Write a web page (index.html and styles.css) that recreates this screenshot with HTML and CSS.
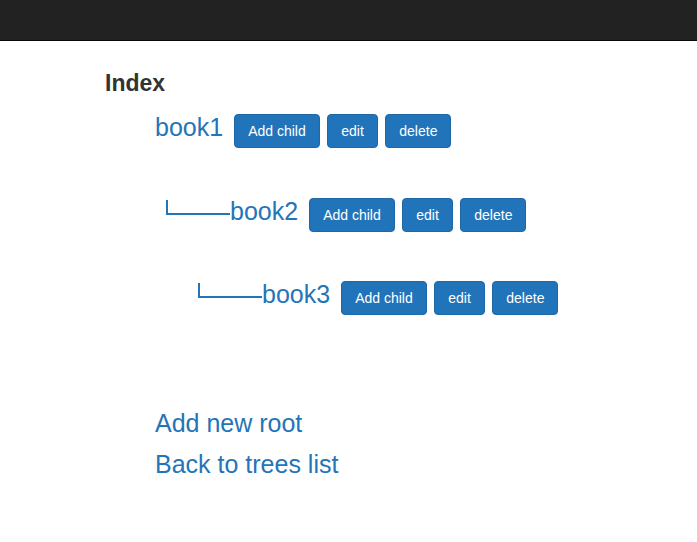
FILE: index.html
```html
<!DOCTYPE html>
<html lang="en">
<head>
<meta charset="utf-8">
<title>Index</title>
<link rel="stylesheet" href="styles.css">
</head>
<body>
<div class="navbar"></div>
<div class="container">
  <h3 class="title">Index</h3>
  <div class="tree">
    <div class="row level-0">
      <a class="node" href="#">book1</a>
      <div class="actions">
        <button class="btn">Add child</button>
        <button class="btn">edit</button>
        <button class="btn">delete</button>
      </div>
    </div>
    <div class="row level-1">
      <span class="connector"></span>
      <a class="node" href="#">book2</a>
      <div class="actions">
        <button class="btn">Add child</button>
        <button class="btn">edit</button>
        <button class="btn">delete</button>
      </div>
    </div>
    <div class="row level-2">
      <span class="connector"></span>
      <a class="node" href="#">book3</a>
      <div class="actions">
        <button class="btn">Add child</button>
        <button class="btn">edit</button>
        <button class="btn">delete</button>
      </div>
    </div>
  </div>
  <div class="links">
    <a class="big-link" href="#">Add new root</a>
    <a class="big-link" href="#">Back to trees list</a>
  </div>
</div>
</body>
</html>
```
FILE: styles.css
```css
html, body {
  margin: 0;
  padding: 0;
  background: #fff;
}
body {
  font-family: "Liberation Sans", Arial, Helvetica, sans-serif;
  font-size: 14px;
  line-height: 20px;
  color: #333;
}
.navbar {
  height: 40px;
  background: #222;
  border-bottom: 1px solid #080808;
}
.container {
  padding-left: 105px;
}
.title {
  margin: 30px 0 0;
  font-size: 23px;
  line-height: 24px;
  font-weight: 700;
  color: #333;
}
.tree {
  margin-top: 19px;
  display: flex;
  flex-direction: column;
  gap: 49.5px;
}
.row {
  display: flex;
  align-items: baseline;
  height: 34px;
}
.level-0 { padding-left: 50px; }
.level-1 { padding-left: 61px; }
.level-2 { padding-left: 93px; }
.connector {
  align-self: flex-start;
  box-sizing: border-box;
  width: 64px;
  height: 15px;
  margin-top: 2px;
  border-left: 2px solid #2474b8;
  border-bottom: 2px solid #2474b8;
}
.node {
  font-size: 25px;
  line-height: 26px;
  color: #2474b8;
  text-decoration: none;
}
.actions {
  display: flex;
  align-items: baseline;
  gap: 7.5px;
  margin-left: 11px;
}
.btn {
  font-family: inherit;
  font-size: 14px;
  line-height: 20px;
  padding: 6px 13px;
  color: #fff;
  background: #2174ba;
  border: 1px solid #1e68a7;
  border-radius: 4px;
  cursor: pointer;
}
.links {
  margin-top: 88px;
  padding-left: 50px;
  display: flex;
  flex-direction: column;
  align-items: flex-start;
}
.big-link {
  font-size: 25px;
  line-height: 41px;
  color: #2474b8;
  text-decoration: none;
}
```
